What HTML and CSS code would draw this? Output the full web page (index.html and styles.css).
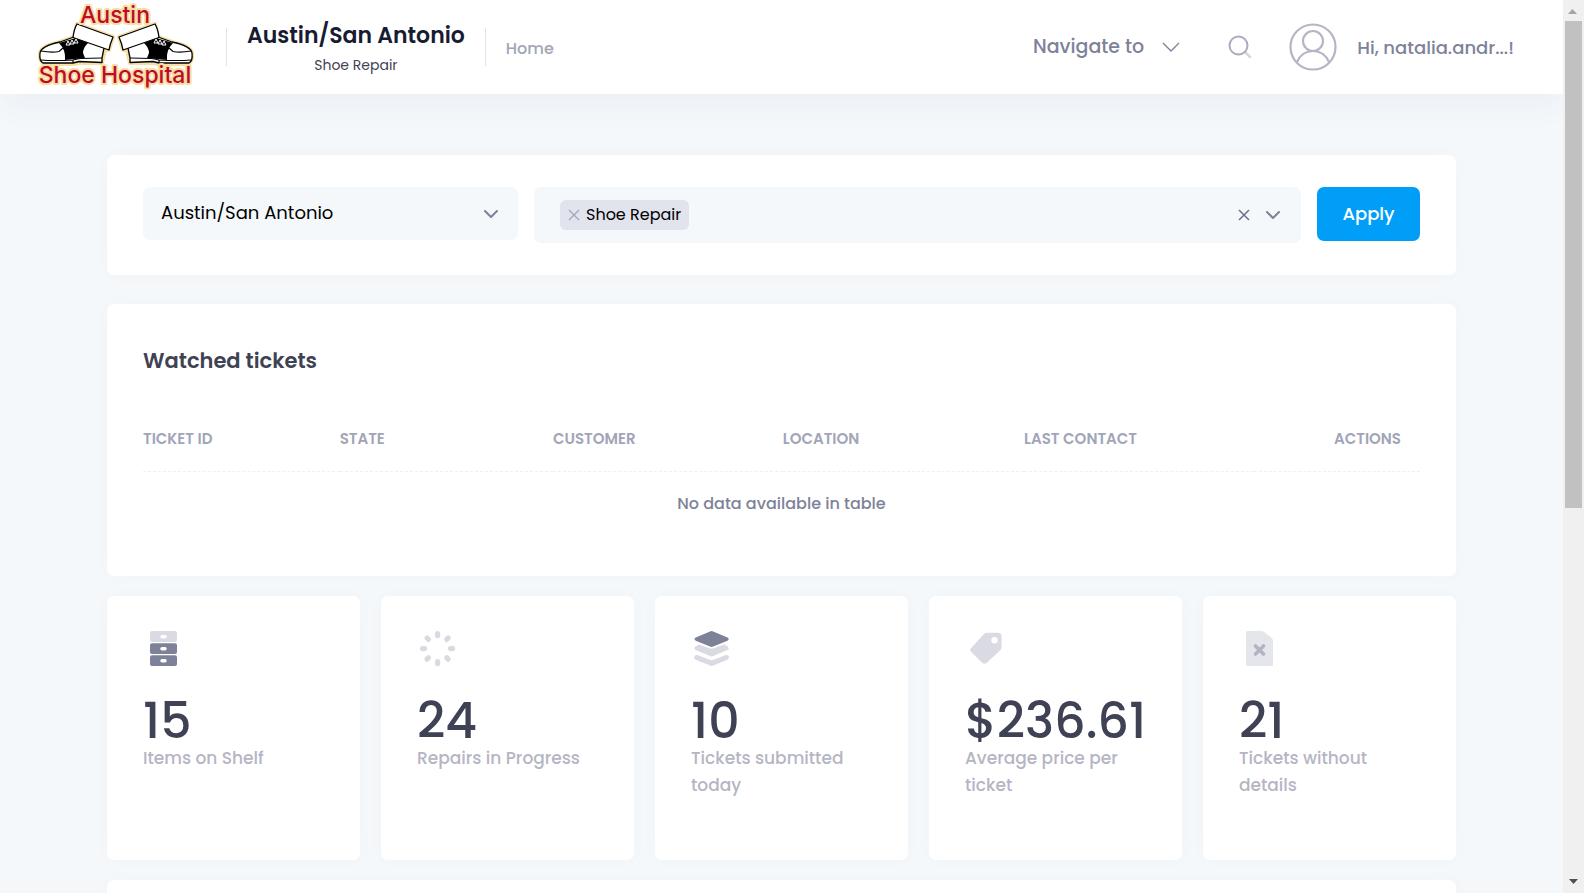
FILE: index.html
```html
<!DOCTYPE html>
<html lang="en">
<head>
<meta charset="utf-8">
<title>Austin/San Antonio - Shoe Repair</title>
<link rel="stylesheet" href="styles.css">
</head>
<body>
<div class="window">
  <div class="page">
    <header class="header">
      <a class="logo" href="#" aria-label="Austin Shoe Hospital">
        <svg width="160" height="94" viewBox="0 0 160 94">
          <defs>
            <g id="shoe">
              <path class="shoe-glow" d="M43 24 79 37 75 50 71 50 68 63H45L39 64H11Q5 63 6 53Q7 46 26 42L40 37Z"/>
              <path class="shoe-white" d="M26 42Q7 46 6 53Q5 61 9 63H39L45 61.500 68 62.500V58L70 48 50 38 40 37Z"/>
              <path class="shoe-black" d="M25 43 42 38 54 43Q49 48 49 53L51 58 31 60Q32 50 25 43Z"/>
              <path class="shoe-line" d="M7 51Q18 53 25 51.500L29 48M7 60Q20 61 39 60L46 58.500 68 58M39 63V60"/>
              <path class="shoe-white" d="M43 24 79 37Q76 44 75 50L39 37.500Q40 29 43 24Z"/>
              <path class="shoe-lace" d="m32 45 2-4 2 4zm4-1 2-4 2 4zm4-1 2-4 2 4z"/>
            </g>
          </defs>
          <use href="#shoe"/>
          <use href="#shoe" transform="matrix(-1 0 0 1 164 0)"/>
          <text class="logo-text" x="81" y="23" text-anchor="middle">Austin</text>
          <text class="logo-text" x="81" y="83" text-anchor="middle">Shoe Hospital</text>
        </svg>
      </a>
      <div class="brand">
        <h1 class="brand-title">Austin/San Antonio</h1>
        <span class="brand-sub">Shoe Repair</span>
      </div>
      <nav class="nav"><a class="nav-link" href="#">Home</a></nav>
      <button class="navigate" type="button">Navigate to
        <svg width="18" height="12" viewBox="0 0 18 12" class="line-thin"><path d="m1 2 8 8 8-8"/></svg>
      </button>
      <button class="search" type="button" aria-label="Search">
        <svg width="26" height="26" viewBox="0 0 26 26"><path class="search-handle" d="m18 18 5 5"/><circle class="search-ring" cx="11.500" cy="11.500" r="9"/></svg>
      </button>
      <button class="user" type="button">
        <svg width="48" height="48" viewBox="0 0 48 48" class="avatar"><circle cx="24" cy="24" r="22.500"/><circle cx="24" cy="18" r="10"/><path d="M8 39Q13 28 24 28T40 39"/></svg>
        <span>Hi, natalia.andr...!</span>
      </button>
    </header>

    <main class="content">
      <form class="card filters">
        <div class="select-box">
          <select class="select" aria-label="Region"><option>Austin/San Antonio</option></select>
          <svg class="select-arrow line" width="14" height="10" viewBox="0 0 14 10"><path d="m1 1 6 6 6-6"/></svg>
        </div>
        <div class="multi">
          <span class="tag">
            <button type="button" aria-label="Remove Shoe Repair"><svg width="12" height="12" viewBox="0 0 12 12" class="line-soft"><path d="m1 1 10 10M11 1 1 11"/></svg></button>
            <span>Shoe Repair</span>
          </span>
          <input class="multi-input" type="text" aria-label="Services">
          <button type="button" aria-label="Clear"><svg width="12" height="12" viewBox="0 0 12 12" class="line-clear"><path d="m1 1 10 10M11 1 1 11"/></svg></button>
          <svg class="line" width="14" height="10" viewBox="0 0 14 10"><path d="m1 2 6 6 6-6"/></svg>
        </div>
        <button class="apply" type="button">Apply</button>
      </form>

      <section class="card watched">
        <h2 class="card-title">Watched tickets</h2>
        <table class="tickets">
          <colgroup><col class="c1"><col class="c2"><col class="c3"><col class="c4"><col class="c5"><col class="c6"></colgroup>
          <thead><tr><th>Ticket ID</th><th>State</th><th>Customer</th><th>Location</th><th>Last contact</th><th class="end">Actions</th></tr></thead>
          <tbody><tr><td colspan="6">No data available in table</td></tr></tbody>
        </table>
      </section>

      <section class="stats">
        <article class="card stat">
          <svg width="42" height="42" viewBox="0 0 42 42" fill-rule="evenodd">
            <path class="soft" d="M9 3H32a2 2 0 0 1 2 2V12a2 2 0 0 1-2 2H9a2 2 0 0 1-2-2V5a2 2 0 0 1 2-2ZM19 7a1.700 1.700 0 0 0 0 3.400h3a1.700 1.700 0 0 0 0-3.400Z"/>
            <path class="dark" d="M9 15.300H32a2 2 0 0 1 2 2V24a2 2 0 0 1-2 2H9a2 2 0 0 1-2-2V17.300a2 2 0 0 1 2-2ZM19 19a1.700 1.700 0 0 0 0 3.400h3a1.700 1.700 0 0 0 0-3.400Z"/>
            <path class="dark" d="M9 27.300H32a2 2 0 0 1 2 2V36a2 2 0 0 1-2 2H9a2 2 0 0 1-2-2V29.300a2 2 0 0 1 2-2ZM19 31a1.700 1.700 0 0 0 0 3.400h3a1.700 1.700 0 0 0 0-3.400Z"/>
          </svg>
          <strong class="stat-value">15</strong><span class="stat-label">Items on Shelf</span>
        </article>
        <article class="card stat">
          <svg width="42" height="42" viewBox="0 0 42 42" class="soft">
            <defs><rect id="tick" x="18" y="3" width="5.200" height="7.200" rx="2.600"/></defs>
            <use href="#tick"/><use href="#tick" transform="rotate(45 20.600 20.600)"/><use href="#tick" transform="rotate(90 20.600 20.600)"/><use href="#tick" transform="rotate(135 20.600 20.600)"/><use href="#tick" transform="rotate(180 20.600 20.600)"/><use href="#tick" transform="rotate(225 20.600 20.600)"/><use href="#tick" transform="rotate(270 20.600 20.600)"/><use href="#tick" transform="rotate(315 20.600 20.600)"/>
          </svg>
          <strong class="stat-value">24</strong><span class="stat-label">Repairs in Progress</span>
        </article>
        <article class="card stat">
          <svg width="42" height="42" viewBox="0 0 42 42">
            <path class="dark" d="M19 3.500Q20.600 2.700 22.200 3.500L36.500 9.500Q39 11 36.500 12.700L22.200 18.600Q20.600 19.400 19 18.600L4.700 12.700Q2.200 11 4.700 9.500Z"/>
            <path class="soft" d="M8 16.500 18.500 20.300Q20.600 21 22.700 20.300L33.200 16.500 36.500 18.500Q39 20.300 36.500 22L22.200 28Q20.600 28.800 19 28L4.700 22Q2.200 20.300 4.700 18.500Z"/>
            <path class="soft" d="M7 27.200 18.500 31.800Q20.600 32.600 22.700 31.800L34.200 27.200C37.500 26 39.500 30 36.500 31.700L22.200 37.600Q20.600 38.400 19 37.600L4.700 31.700C1.700 30 3.700 26 7 27.200Z"/>
          </svg>
          <strong class="stat-value">10</strong><span class="stat-label">Tickets submitted today</span>
        </article>
        <article class="card stat">
          <svg width="42" height="42" viewBox="0 0 42 42" fill-rule="evenodd">
            <path class="soft" d="M22 4.700H33a3.500 3.500 0 0 1 3.500 3.500V19.500Q36.500 21 35.500 22L21.500 35Q19.500 36.500 17.500 35L5.800 23.500Q4.500 22 5.800 20.500L18.500 6.500Q20 4.700 22 4.700ZM29.500 9a3.200 3.200 0 1 0 0 6.400a3.200 3.200 0 1 0 0-6.400Z"/>
          </svg>
          <strong class="stat-value">$236.61</strong><span class="stat-label">Average price per ticket</span>
        </article>
        <article class="card stat">
          <svg width="42" height="42" viewBox="0 0 42 42">
            <path class="paper" d="M8.500 3H22Q24 3 25.500 4.300L32.500 9.800Q34 11 34 13V36.500Q34 38 32.500 38H8.500Q7 38 7 36.500V4.500Q7 3 8.500 3Z"/>
            <path class="cross" d="m16.500 18 8 8M24.500 18l-8 8"/>
          </svg>
          <strong class="stat-value">21</strong><span class="stat-label">Tickets without details</span>
        </article>
      </section>

      <section class="card next"></section>
    </main>
  </div>

  <div class="scrollbar" aria-hidden="true">
    <svg width="21" height="21" viewBox="0 0 21 21"><path fill="#a3a3a3" d="m5 14 4.500-5 4.500 5Z"/></svg>
    <div class="thumb"></div>
    <svg width="21" height="21" viewBox="0 0 21 21"><path fill="#505050" d="m6 7 4.500 5L15 7Z"/></svg>
  </div>
</div>
</body>
</html>
```
FILE: styles.css
```css
* { box-sizing: border-box; }
body {
  margin: 0;
  font-family: Poppins, Inter, "Open Sans", sans-serif;
  font-size: 16px;
  font-weight: 400;
  color: #3f4254;
  background: #f4f8fb;
}
button, input, select { font: inherit; color: inherit; }
button { cursor: pointer; border: 0; background: none; padding: 0; }
a { text-decoration: none; }
svg { display: block; flex: none; }

.window { display: flex; height: 100vh; overflow: hidden; }
.page { flex: 1; min-width: 0; overflow: hidden; }

.header {
  display: flex;
  align-items: center;
  height: 94px;
  padding: 0 49px 0 34px;
  background: #fff;
  box-shadow: 0 10px 30px rgba(82, 63, 105, 0.05);
}
.logo svg { overflow: visible; }
.logo-text {
  font-family: Inter, sans-serif;
  font-size: 23px;
  font-weight: 500;
  fill: #c00a2c;
  stroke: #f7dfa2;
  stroke-width: 4px;
  stroke-linejoin: round;
  paint-order: stroke;
}
.shoe-glow { fill: #f7dfa2; stroke: #f7dfa2; stroke-width: 4; stroke-linejoin: round; }
.shoe-white { fill: #fff; stroke: #000; stroke-width: 1.3; stroke-linejoin: round; }
.shoe-black { fill: #000; }
.shoe-line { fill: none; stroke: #000; stroke-width: 1.2; }
.shoe-lace { fill: none; stroke: #fff; stroke-width: 1; }

.brand {
  position: relative;
  display: flex;
  flex-direction: column;
  align-items: center;
  gap: 5px;
  margin-left: 32px;
  padding: 3px 21px 0;
}
.brand::before, .brand::after {
  content: "";
  position: absolute;
  top: 9px;
  width: 1px;
  height: 38px;
  background: #e1e2ee;
}
.brand::before { left: 0; }
.brand::after { right: 0; }
.brand-title { margin: 0; font-size: 22px; line-height: 28px; font-weight: 600; color: #181c32; }
.brand-sub { font-size: 14px; line-height: 20px; }
.nav { margin-left: 20px; flex: 1; padding-top: 2px; }
.nav-link { color: #a1a5b7; font-size: 16px; font-weight: 500; }
.navigate { display: flex; align-items: center; gap: 18px; color: #7e8299; font-size: 19px; font-weight: 500; line-height: 28px; }
.search { margin-left: 47px; }
.user { display: flex; align-items: center; gap: 20px; margin-left: 36px; color: #7e8299; font-size: 18px; font-weight: 500; }
.line-thin { fill: none; stroke: #7e8299; stroke-width: 1.3; }
.line { fill: none; stroke: #7e8299; stroke-width: 2; stroke-linecap: round; stroke-linejoin: round; }
.line-soft { fill: none; stroke: #a1a5b7; stroke-width: 1.2; }
.line-clear { fill: none; stroke: #6d7188; stroke-width: 1.5; }
.search-ring { fill: none; stroke: #a9abbf; stroke-width: 2; }
.search-handle { fill: none; stroke: #d5d6e0; stroke-width: 2.5; stroke-linecap: round; }
.avatar { fill: none; stroke: #b5b5c6; stroke-width: 2.2; }

.content { padding: 61px 107px 0; }
.card { background: #fff; border-radius: 7px; box-shadow: 0 0 20px rgba(76, 87, 125, 0.02); }

.filters {
  display: grid;
  grid-template-columns: 375fr 767fr 103px;
  align-items: start;
  gap: 16px;
  padding: 32px 36px;
}
.select-box { position: relative; }
.select {
  appearance: none;
  width: 100%;
  height: 53px;
  padding: 0 18px 2px;
  border: 0;
  border-radius: 7px;
  background: #f4f8fb;
  color: #000;
  font-size: 18px;
}
.select-arrow { position: absolute; right: 20px; top: 23px; }
.multi {
  min-width: 0;
  display: flex;
  align-items: center;
  gap: 16px;
  height: 56px;
  padding: 0 21px 0 26px;
  border-radius: 7px;
  background: #f4f8fb;
}
.tag {
  display: flex;
  align-items: center;
  gap: 6px;
  height: 30px;
  padding: 0 8px 1px 8px;
  border-radius: 6px;
  background: #e1e3ed;
  color: #000;
}
.multi-input { flex: 1; min-width: 0; border: 0; padding: 0; background: none; outline: 0; }
.apply {
  height: 54px;
  padding-bottom: 2px;
  border-radius: 7px;
  background: #009ef7;
  color: #fff;
  font-size: 18px;
  font-weight: 500;
}

.watched { margin-top: 29px; padding: 42px 36px 50px; }
.card-title { margin: 0; font-size: 21px; line-height: 30px; font-weight: 600; }
.tickets { width: 100%; margin-top: 35px; table-layout: fixed; border-collapse: collapse; }
.tickets th {
  height: 60px;
  padding: 0 0 5px;
  border-bottom: 1px dashed #eff0f4;
  text-align: left;
  text-transform: uppercase;
  font-size: 15px;
  font-weight: 600;
  color: #a1a5b7;
}
.tickets .end { text-align: right; padding-right: 19px; }
.tickets td { height: 55px; padding: 9px 0 0; text-align: center; color: #7e8299; font-size: 16px; font-weight: 500; }
.c1 { width: 15.4%; }
.c2 { width: 16.7%; }
.c3 { width: 18%; }
.c4 { width: 18.9%; }
.c5 { width: 18%; }
.c6 { width: 13%; }

.stats { display: grid; grid-template-columns: repeat(5, 1fr); gap: 21px; margin-top: 20px; }
.stat { display: flex; flex-direction: column; min-width: 0; min-height: 264px; padding: 32px 36px; }
.stat-value { margin-top: 27px; font-size: 49px; line-height: 48px; font-weight: 500; }
.stat-label { color: #b5b5c3; font-size: 17px; line-height: 27px; font-weight: 500; }
.dark { fill: #7e8299; }
.soft { fill: #d9dae2; }
.paper { fill: #e5e6ec; }
.cross { fill: none; stroke: #b2b3c2; stroke-width: 3.6; stroke-linecap: round; }
.next { height: 80px; margin-top: 20px; }

.scrollbar { display: flex; flex-direction: column; width: 21px; background: #f0f0f0; }
.thumb { flex: 0 0 54.5%; margin: 0 2px; background: #c1c1c1; }
.scrollbar svg:last-child { margin-top: auto; }
```
